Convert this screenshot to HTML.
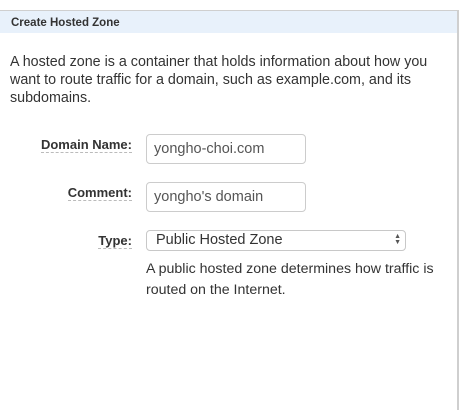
<!DOCTYPE html>
<html><head><style>
html,body{margin:0;width:461px;height:410px;overflow:hidden}
body{background:#fff;font-family:"Liberation Sans",sans-serif;position:relative}
.box{position:absolute;left:-1px;top:10px;width:457px;height:400px;border:1px solid #cfcfcf;border-bottom:0;border-right:2px solid #cfcfcf}
.hd{height:22px;background:#e8f1fb;font-weight:bold;font-size:11.5px;color:#333;padding-left:11px;line-height:24px}
.p{position:absolute;left:10px;top:53px;font-size:14.3px;line-height:18px;color:#333;width:445px}
.lb{position:absolute;font-weight:bold;font-size:13px;color:#333;border-bottom:1px dashed #bbb;line-height:15px}
.in{position:absolute;left:146px;border:1px solid #ccc;border-radius:4px;font-size:14.5px;color:#555;line-height:28px;padding-left:7px;box-sizing:border-box;width:160px;height:30px}
.sel{position:absolute;left:146px;top:230px;width:260px;height:21px;border:1px solid #c8c8c8;border-radius:4px;box-sizing:border-box;font-size:14.5px;color:#333;line-height:19px;padding-left:9px}
.help{position:absolute;left:146px;top:259px;font-size:14.2px;line-height:21px;color:#333}
</style></head><body>
<div class="box"><div class="hd">Create Hosted Zone</div></div>
<div class="p">A hosted zone is a container that holds information about how you want to route traffic for a domain, such as example.com, and its subdomains.</div>
<div class="lb" style="right:329px;top:137px">Domain Name:</div>
<div class="in" style="top:134px">yongho-choi.com</div>
<div class="lb" style="right:329px;top:185px">Comment:</div>
<div class="in" style="top:182px">yongho's domain</div>
<div class="lb" style="right:329px;top:233px">Type:</div>
<div class="sel">Public Hosted Zone<span style="position:absolute;right:4px;top:3px;font-size:7px;line-height:6px;color:#555">▲<br>▼</span></div>
<div class="help">A public hosted zone determines how traffic is<br>routed on the Internet.</div>
</body></html>
